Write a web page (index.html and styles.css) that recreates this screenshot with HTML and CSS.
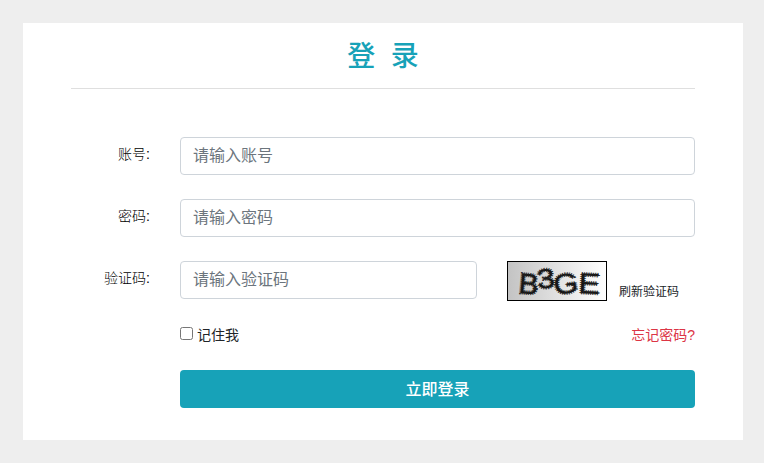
FILE: index.html
```html
<!DOCTYPE html>
<html lang="zh-CN">
<head>
<meta charset="utf-8">
<title>登录</title>
<link rel="stylesheet" href="styles.css">
</head>
<body>
<main class="card">
  <h1 class="title">登&nbsp; 录</h1>
  <form class="form">
    <label class="label" for="account">账号:</label>
    <input class="control wide" id="account" type="text" placeholder="请输入账号">
    <label class="label" for="password">密码:</label>
    <input class="control wide" id="password" type="password" placeholder="请输入密码">
    <label class="label" for="captcha">验证码:</label>
    <input class="control" id="captcha" type="text" placeholder="请输入验证码">
    <div class="captcha">
      <svg class="captcha-image" viewBox="0 0 100 40">
        <defs>
          <linearGradient id="shade"><stop offset="0" stop-color="#c3c3c3"/><stop offset="1" stop-color="#fff"/></linearGradient>
        </defs>
        <rect x=".5" y=".5" width="99" height="39" fill="url(#shade)" stroke="#000"/>
        <g class="captcha-code">
          <text transform="translate(11 32) rotate(5) scale(1.02 1)">B</text>
          <text transform="translate(31 28) rotate(-6) scale(1.1 .95)">3</text>
          <text transform="translate(48 34) rotate(-8) scale(1.08 .98)">G</text>
          <text transform="translate(71 32) rotate(3) scale(1.12 1)">E</text>
        </g>
      </svg>
      <a class="refresh">刷新验证码</a>
    </div>
    <div class="options">
      <label class="remember"><input class="check" type="checkbox">记住我</label>
      <a class="forgot">忘记密码?</a>
    </div>
    <button class="submit" type="button">立即登录</button>
  </form>
</main>
</body>
</html>
```
FILE: styles.css
```css
* { box-sizing: border-box; }
body { margin: 0; padding: 23px 21px 23px 23px; background: #eee; color: #212529; font-family: "Liberation Sans", "Noto Sans CJK SC", sans-serif; }
.card { height: 417px; padding: 0 48px; background: #fff; }
.title { height: 66px; margin: 0; padding-top: 14px; border-bottom: 1px solid #dfdfdf; text-align: center; font-size: 28px; line-height: 40px; font-weight: 500; color: #17a2b8; }
.form { display: grid; grid-template-columns: 79px 297px 188px; grid-template-rows: 38px 38px 40px 21px 38px; column-gap: 30px; row-gap: 24px; padding-top: 48px; }
.label { padding-top: 7px; text-align: right; font-size: 14px; line-height: 20px; font-weight: 300; color: #000; }
.control { width: 100%; height: 38px; padding: 6px 12px; border: 1px solid #ced4da; border-radius: 4px; background: #fff; font: inherit; font-size: 16px; line-height: 24px; }
.control::placeholder { color: #6c757d; opacity: 1; }
.wide { grid-column: 2 / 4; }
.captcha { display: flex; gap: 12px; }
.captcha-image { width: 100px; height: 40px; }
.captcha-code { fill: #111; stroke: #222; stroke-width: 2.4px; stroke-dasharray: .9 1.1; font: 29px "Liberation Sans", sans-serif; }
.refresh { padding-top: 22px; font-size: 12px; line-height: 18px; }
.options { grid-column: 2 / 4; display: flex; justify-content: space-between; align-items: flex-start; font-size: 14px; line-height: 20px; }
.remember { display: flex; align-items: center; }
.check { width: 13px; height: 13px; margin: 0 4px 3px 0; }
.forgot { color: #dc3545; }
.submit { grid-column: 2 / 4; height: 38px; padding: 0 0 3px; border: 0; border-radius: 4px; background: #17a2b8; color: #fff; font: inherit; font-size: 16px; font-weight: 500; }
```
